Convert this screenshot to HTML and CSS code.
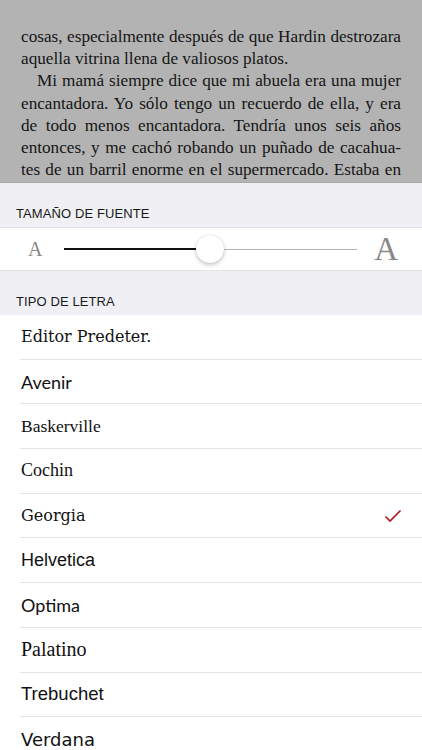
FILE: index.html
```html
<!DOCTYPE html>
<html lang="es">
<head>
<meta charset="utf-8">
<title>Tipo de letra</title>
<link rel="stylesheet" href="styles.css">
</head>
<body>
<div class="screen">
  <section class="reader">
    <p class="para">
      <span class="ln">cosas, especialmente después de que Hardin destrozara</span>
      <span class="ln last">aquella vitrina llena de valiosos platos.</span>
    </p>
    <p class="para">
      <span class="ln indent">Mi mamá siempre dice que mi abuela era una mujer</span>
      <span class="ln">encantadora. Yo sólo tengo un recuerdo de ella, y era</span>
      <span class="ln">de todo menos encantadora. Tendría unos seis años</span>
      <span class="ln">entonces, y me cachó robando un puñado de cacahua-</span>
      <span class="ln">tes de un barril enorme en el supermercado. Estaba en</span>
    </p>
  </section>
  <section class="panel">
    <div class="label">TAMAÑO DE FUENTE</div>
    <div class="size-row">
      <span class="a-small">A</span>
      <div class="slider">
        <div class="track-fill"></div>
        <div class="thumb"></div>
        <div class="track-rest"></div>
      </div>
      <span class="a-big">A</span>
    </div>
    <div class="label">TIPO DE LETRA</div>
    <ul class="fonts">
      <li class="item f-editor">Editor Predeter.</li>
      <li class="item f-avenir">Avenir</li>
      <li class="item f-baskerville">Baskerville</li>
      <li class="item f-cochin">Cochin</li>
      <li class="item f-georgia">Georgia
        <svg class="check" width="18" height="14" viewBox="0 0 18 14"><path d="M1.5 7.5 L6 12 L16.5 1.5" fill="none" stroke="#b0151d" stroke-width="1.6"/></svg>
      </li>
      <li class="item f-helvetica">Helvetica</li>
      <li class="item f-optima">Optima</li>
      <li class="item f-palatino">Palatino</li>
      <li class="item f-trebuchet">Trebuchet</li>
      <li class="item f-verdana">Verdana</li>
    </ul>
  </section>
</div>
</body>
</html>
```
FILE: styles.css
```css
html, body {
  margin: 0;
  padding: 0;
  background: #ffffff;
}
.screen {
  width: 422px;
  height: 750px;
  overflow: hidden;
}
.reader {
  height: 183px;
  box-sizing: border-box;
  background: #b3b3b3;
  padding: 26px 21px 0 21px;
  border-bottom: 1px solid #a9a9a9;
  overflow: hidden;
  font-family: "Liberation Serif", serif;
  font-size: 17.2px;
  line-height: 22.2px;
  color: #151515;
}
.para {
  margin: 0;
}
.ln {
  display: block;
  text-align: justify;
  text-align-last: justify;
  white-space: nowrap;
}
.ln.last {
  text-align-last: left;
}
.ln.indent {
  padding-left: 16px;
}
.panel {
  background: #efeff4;
}
.label {
  height: 44px;
  box-sizing: border-box;
  display: flex;
  align-items: flex-end;
  padding: 0 0 6px 16px;
  font-family: "Liberation Sans", sans-serif;
  font-size: 13px;
  color: #1a1a1a;
  letter-spacing: 0.1px;
}
.size-row {
  height: 44px;
  box-sizing: border-box;
  background: #fff;
  border-top: 1px solid #e2e2e6;
  border-bottom: 1px solid #e2e2e6;
  display: flex;
  align-items: center;
  padding: 0 24px 0 28px;
  font-family: "Liberation Serif", serif;
  color: #888;
}
.a-small {
  font-size: 20px;
  width: 36px;
}
.slider {
  flex: 1;
  display: flex;
  align-items: center;
  margin-right: 17px;
}
.track-fill {
  width: 133px;
  height: 2px;
  background: #111;
}
.thumb {
  width: 28px;
  height: 28px;
  border-radius: 50%;
  background: #fff;
  box-shadow: 0 2px 4px rgba(0,0,0,0.22), 0 0 1px rgba(0,0,0,0.2);
  margin: 0 -1px;
  position: relative;
  z-index: 1;
}
.track-rest {
  flex: 1;
  height: 1px;
  background: #b4b4b4;
}
.a-big {
  font-size: 33px;
}
.fonts {
  list-style: none;
  margin: 0;
  padding: 0 0 0 20px;
  background: #fff;
}
.item {
  height: 44.7px;
  box-sizing: border-box;
  border-bottom: 1px solid #e3e3e6;
  display: flex;
  align-items: center;
  justify-content: space-between;
  padding: 0 20px 0 1px;
  color: #111;
  font-size: 18px;
}
.check {
  margin-top: 1px;
}
.f-editor { font-family: "DejaVu Serif", serif; font-size: 16px; }
.f-avenir { font-family: "Lato", sans-serif; font-size: 18px; }
.f-baskerville { font-family: "Liberation Serif", serif; font-size: 17.5px; }
.f-cochin { font-family: "Liberation Serif", serif; font-size: 18px; }
.f-georgia { font-family: "DejaVu Serif", serif; font-size: 16px; }
.f-helvetica { font-family: "Liberation Sans", sans-serif; font-size: 18px; }
.f-optima { font-family: "Lato", sans-serif; font-size: 18px; }
.f-palatino { font-family: "Liberation Serif", serif; font-size: 20px; }
.f-trebuchet { font-family: "Liberation Sans", sans-serif; font-size: 18.5px; }
.f-verdana { font-family: "DejaVu Sans", sans-serif; font-size: 18px; }
```
